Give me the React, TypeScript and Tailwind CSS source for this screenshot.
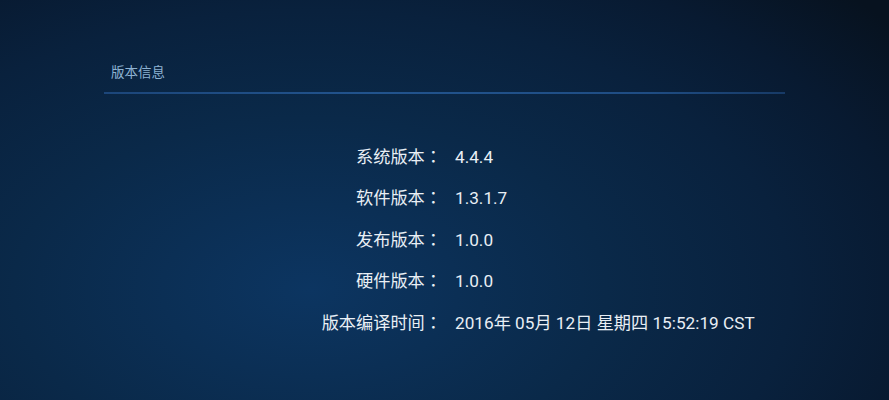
export default function App() {
  const rows: [string, string][] = [
    ["系统版本", "4.4.4"],
    ["软件版本", "1.3.1.7"],
    ["发布版本", "1.0.0"],
    ["硬件版本", "1.0.0"],
    ["版本编译时间", "2016年 05月 12日 星期四 15:52:19 CST"],
  ];

  return (
    <div className="h-[400px] w-[889px] overflow-hidden bg-[radial-gradient(ellipse_740px_430px_at_310px_290px,#0c3561_0%,#0a2949_40%,#09213d_65%,#081a31_82%,#07121f_100%)] font-['Roboto','Noto_Sans_CJK_SC',sans-serif] text-[#e9eff5]">
      <header className="px-[104px] pt-[62px]">
        <h1 className="pl-[7px] text-[13.5px] leading-[20px] text-[#8db2d2]">版本信息</h1>
        <div className="mt-[10px] h-[2px] bg-[linear-gradient(90deg,#1c467a,#22548e_40%,#1f4d84_80%,#173a66)]" />
      </header>

      <div className="mt-[42px] grid grid-cols-[442px_1fr] auto-rows-[41.5px] items-center text-[17.2px] leading-[24px]">
        {rows.map(([label, value]) => (
          <div key={label} className="contents">
            <span className="whitespace-nowrap text-right">
              {label}
              <span className="font-['Noto_Sans_CJK_TC',sans-serif] leading-none">：</span>
            </span>
            <span className="pl-[13px]">{value}</span>
          </div>
        ))}
      </div>
    </div>
  );
}
